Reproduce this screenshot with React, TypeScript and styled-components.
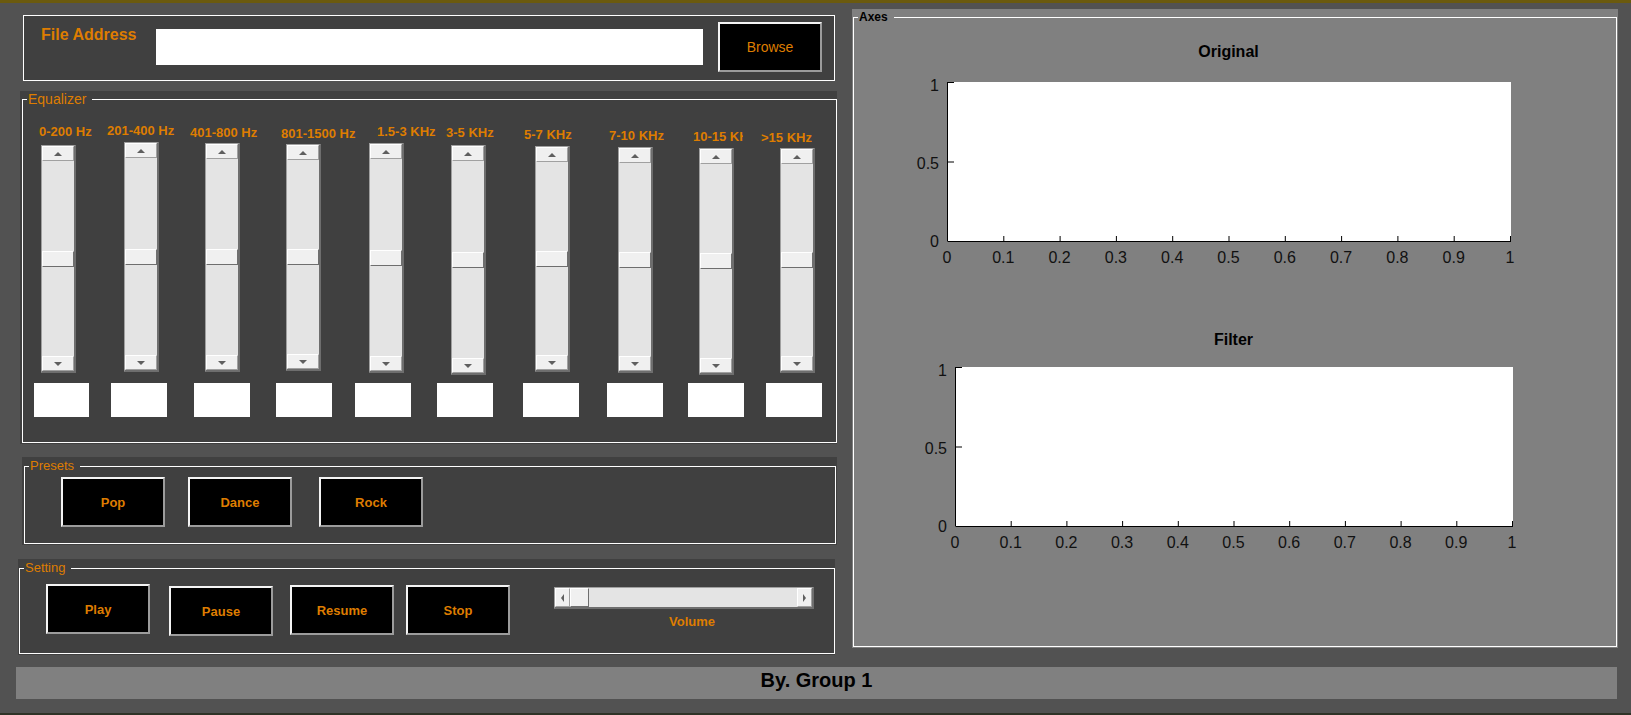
import React from "react";
import styled, { createGlobalStyle } from "styled-components";

const ORANGE = "#de7d00";
const PANEL = "#404040";
const PAGE = "#525252";
const AXES_BG = "#808080";
const FONT = `"Liberation Sans", Arial, Helvetica, sans-serif`;

const GlobalStyle = createGlobalStyle`
  html, body { margin: 0; padding: 0; background: ${PAGE}; }
  body { font-family: ${FONT}; }
  #root { width: 1631px; height: 715px; overflow: hidden; }
  *, *::before, *::after { box-sizing: border-box; }
`;

const Window = styled.div`
  width: 1631px;
  height: 715px;
  background: ${PAGE};
  display: flex;
  flex-direction: column;
  overflow: hidden;
`;

const TopStrip = styled.div`
  flex: none;
  height: 3px;
  background: #6b5a0e;
`;

const Main = styled.div`
  flex: none;
  display: flex;
  align-items: flex-start;
  padding-left: 18px;
`;

const LeftColumn = styled.div`
  flex: none;
  width: 819px;
  display: flex;
  flex-direction: column;
`;

/* ---------- File address panel ---------- */

const FilePanel = styled.div`
  flex: none;
  margin: 12px 0 0 5px;
  width: 812px;
  height: 66px;
  border: 1px solid #ffffff;
  background: ${PANEL};
  display: flex;
  align-items: flex-start;
`;

const FileLabel = styled.div`
  flex: none;
  margin: 10px 0 0 17px;
  width: 115px;
  font-size: 16px;
  line-height: 18px;
  font-weight: 700;
  color: ${ORANGE};
  white-space: nowrap;
`;

const FileInput = styled.input`
  flex: none;
  margin-top: 13px;
  width: 547px;
  height: 36px;
  border: none;
  outline: none;
  background: #ffffff;
  padding: 0 4px;
  font-family: ${FONT};
`;

/* ---------- generic group (titled panel) ---------- */

const Group = styled.div<{ $w: number; $h: number; $ml: number; $mt: number; $pad: string; $bg: string }>`
  flex: none;
  display: flex;
  width: ${(p) => p.$w}px;
  height: ${(p) => p.$h}px;
  margin: ${(p) => p.$mt}px 0 0 ${(p) => p.$ml}px;
  padding: ${(p) => p.$pad};
  background: ${(p) => p.$bg};
`;

const Frame = styled.div`
  flex: 1;
  min-width: 0;
  display: flex;
  flex-direction: column;
  border: 1px solid #ffffff;
`;

const Legend = styled.div<{ $size: number; $lh: number; $bold?: boolean; $color: string; $bg: string; $lift: number }>`
  flex: none;
  align-self: flex-start;
  margin: -${(p) => p.$lift}px 0 0 4px;
  padding: 0 6px 0 1px;
  font-size: ${(p) => p.$size}px;
  line-height: ${(p) => p.$lh}px;
  font-weight: ${(p) => (p.$bold ? 700 : 400)};
  color: ${(p) => p.$color};
  background: ${(p) => p.$bg};
  white-space: nowrap;
`;

/* ---------- buttons ---------- */

const PushButton = styled.button<{ $ml: number; $mt: number; $regular?: boolean }>`
  flex: none;
  width: 104px;
  height: 50px;
  margin: ${(p) => p.$mt}px 0 0 ${(p) => p.$ml}px;
  padding: 0;
  background: #000000;
  color: ${ORANGE};
  font-family: ${FONT};
  font-size: ${(p) => (p.$regular ? 14 : 13)}px;
  font-weight: ${(p) => (p.$regular ? 400 : 700)};
  border-style: solid;
  border-width: 2px;
  border-color: #f4f4f4 #9c9c9c #9c9c9c #f4f4f4;
  cursor: pointer;
`;

/* ---------- scroll bar parts ---------- */

const Arrow = styled.span<{ $dir: "up" | "down" | "left" | "right" }>`
  width: 0;
  height: 0;
  border-style: solid;
  border-color: transparent;
  ${(p) =>
    p.$dir === "up"
      ? "border-width: 0 4px 4px 4px; border-bottom-color: #5f5f5f;"
      : p.$dir === "down"
      ? "border-width: 4px 4px 0 4px; border-top-color: #5f5f5f;"
      : p.$dir === "left"
      ? "border-width: 4px 3px 4px 0; border-right-color: #5f5f5f;"
      : "border-width: 4px 0 4px 3px; border-left-color: #5f5f5f;"}
`;

const ScrollBtn = styled.div<{ $vertical?: boolean }>`
  flex: none;
  ${(p) => (p.$vertical ? "height: 15px;" : "width: 15px;")}
  display: flex;
  align-items: center;
  justify-content: center;
  background: #f0f0f0;
  border: 1px solid;
  border-color: #ffffff #a0a0a0 #a0a0a0 #ffffff;
`;

const Thumb = styled.div<{ $vertical?: boolean }>`
  flex: none;
  ${(p) => (p.$vertical ? "height: 16px;" : "width: 19px;")}
  background: #f0f0f0;
  border: 1px solid;
  border-color: #ffffff #6e6e6e #6e6e6e #ffffff;
`;

const TrackFill = styled.div`
  flex: 1;
`;

const VSlider = styled.div<{ $ml: number; $mt: number; $h: number }>`
  flex: none;
  width: 35px;
  height: ${(p) => p.$h}px;
  margin: ${(p) => p.$mt}px 0 0 ${(p) => p.$ml}px;
  display: flex;
  flex-direction: column;
  background: #e4e4e4;
  border-style: solid;
  border-width: 1px 2px 2px 1px;
  border-color: #a0a0a0 #6e6e6e #6e6e6e #a0a0a0;
`;

const HSlider = styled.div`
  flex: none;
  width: 260px;
  height: 22px;
  display: flex;
  background: #e4e4e4;
  border-style: solid;
  border-width: 1px 2px 2px 1px;
  border-color: #a0a0a0 #6e6e6e #6e6e6e #a0a0a0;
`;

/* ---------- equalizer ---------- */

const BandRow = styled.div<{ $h: number; $mt?: number }>`
  flex: none;
  display: flex;
  align-items: flex-start;
  height: ${(p) => p.$h}px;
  margin-top: ${(p) => p.$mt ?? 0}px;
`;

const BandLabel = styled.div<{ $ml: number; $mt: number; $w: number }>`
  flex: none;
  width: ${(p) => p.$w}px;
  margin: ${(p) => p.$mt}px 0 0 ${(p) => p.$ml}px;
  overflow: hidden;
  white-space: nowrap;
  font-size: 13px;
  line-height: 15px;
  font-weight: 700;
  color: ${ORANGE};
`;

const ValueBox = styled.div<{ $ml: number; $w: number }>`
  flex: none;
  width: ${(p) => p.$w}px;
  height: 34px;
  margin-left: ${(p) => p.$ml}px;
  background: #ffffff;
`;

/* ---------- setting ---------- */

const ControlRow = styled.div<{ $mt: number }>`
  flex: none;
  display: flex;
  align-items: flex-start;
  margin-top: ${(p) => p.$mt}px;
`;

const VolumeBlock = styled.div<{ $ml: number; $mt: number }>`
  flex: none;
  display: flex;
  flex-direction: column;
  margin: ${(p) => p.$mt}px 0 0 ${(p) => p.$ml}px;
`;

const VolumeLabel = styled.div`
  margin: 5px 0 0 115px;
  font-size: 13px;
  line-height: 15px;
  font-weight: 700;
  color: ${ORANGE};
`;

/* ---------- axes ---------- */

const AxesBlock = styled.div<{ $ml: number; $mt: number }>`
  flex: none;
  display: flex;
  flex-direction: column;
  align-items: flex-start;
  margin: ${(p) => p.$mt}px 0 0 ${(p) => p.$ml}px;
`;

const AxesTitle = styled.div<{ $w: number }>`
  width: ${(p) => p.$w + 40}px;
  padding-left: 40px;
  text-align: center;
  font-size: 16px;
  line-height: 18px;
  font-weight: 700;
  color: #000000;
`;

const PlotRow = styled.div<{ $mt: number }>`
  display: flex;
  margin-top: ${(p) => p.$mt}px;
`;

const YTicks = styled.div<{ $h: number }>`
  flex: none;
  width: 40px;
  height: ${(p) => p.$h}px;
  padding-right: 8px;
  display: flex;
  flex-direction: column;
  justify-content: space-between;
  align-items: flex-end;
`;

const YTick = styled.div`
  height: 0;
  display: flex;
  align-items: center;
  padding-top: 4px;
  font-size: 16px;
  line-height: 18px;
  color: #111111;
  white-space: nowrap;
`;

const XTicks = styled.div<{ $w: number }>`
  width: ${(p) => p.$w}px;
  margin: 7px 0 0 40px;
  display: flex;
  justify-content: space-between;
`;

const XTick = styled.div`
  width: 0;
  display: flex;
  justify-content: center;
  font-size: 16px;
  line-height: 18px;
  color: #111111;
  white-space: nowrap;
`;

const PlotSvg = styled.svg`
  display: block;
  flex: none;
`;

/* ---------- footer ---------- */

const Footer = styled.div`
  flex: none;
  margin: 12px 0 0 16px;
  width: 1601px;
  height: 32px;
  background: ${AXES_BG};
  text-align: center;
  font-size: 20px;
  line-height: 26px;
  font-weight: 700;
  color: #000000;
`;

const BottomLine = styled.div`
  flex: none;
  margin-top: auto;
  height: 2px;
  background: #2f3327;
`;

/* ---------- data ---------- */

type Band = {
  label: string;
  lx: number; lw: number; lt: number;
  sx: number; st: number; sh: number;
  bx: number; bw: number;
};

const bands: Band[] = [
  { label: "0-200 Hz", lx: 39, lw: 64, lt: 1, sx: 41, st: 3, sh: 228, bx: 34, bw: 55 },
  { label: "201-400 Hz", lx: 107, lw: 76, lt: 0, sx: 124, st: 0, sh: 230, bx: 111, bw: 56 },
  { label: "401-800 Hz", lx: 190, lw: 80, lt: 2, sx: 205, st: 1, sh: 229, bx: 194, bw: 56 },
  { label: "801-1500 Hz", lx: 281, lw: 90, lt: 3, sx: 286, st: 2, sh: 227, bx: 276, bw: 56 },
  { label: "1.5-3 KHz", lx: 377, lw: 64, lt: 1, sx: 369, st: 1, sh: 230, bx: 355, bw: 56 },
  { label: "3-5 KHz", lx: 446, lw: 72, lt: 2, sx: 451, st: 3, sh: 230, bx: 437, bw: 56 },
  { label: "5-7 KHz", lx: 524, lw: 80, lt: 4, sx: 535, st: 4, sh: 226, bx: 523, bw: 56 },
  { label: "7-10 KHz", lx: 609, lw: 80, lt: 5, sx: 618, st: 5, sh: 226, bx: 607, bw: 56 },
  { label: "10-15 KHz", lx: 693, lw: 50, lt: 6, sx: 699, st: 6, sh: 227, bx: 688, bw: 56 },
  { label: ">15 KHz", lx: 761, lw: 60, lt: 7, sx: 780, st: 6, sh: 225, bx: 766, bw: 56 },
];

const EQ_LEFT = 23;
const SLIDER_W = 35;

const xTickLabels = ["0", "0.1", "0.2", "0.3", "0.4", "0.5", "0.6", "0.7", "0.8", "0.9", "1"];
const yTickLabels = ["1", "0.5", "0"];

function gaps<T>(items: T[], start: (t: T) => number, width: (t: T) => number, origin: number): number[] {
  const out: number[] = [];
  let prev = origin;
  for (const it of items) {
    out.push(start(it) - prev);
    prev = start(it) + width(it);
  }
  return out;
}

function VerticalSlider({ ml, mt, h }: { ml: number; mt: number; h: number }) {
  return (
    <VSlider $ml={ml} $mt={mt} $h={h}>
      <ScrollBtn $vertical>
        <Arrow $dir="up" />
      </ScrollBtn>
      <TrackFill />
      <Thumb $vertical />
      <TrackFill />
      <ScrollBtn $vertical>
        <Arrow $dir="down" />
      </ScrollBtn>
    </VSlider>
  );
}

function Plot({ w, h }: { w: number; h: number }) {
  const xs = Array.from({ length: 11 }, (_, i) => 0.5 + (i * w) / 10);
  const ys = [0.5, (h - 1) / 2 + 0.5, h - 0.5];
  return (
    <PlotSvg width={w + 1} height={h} viewBox={`0 0 ${w + 1} ${h}`}>
      <rect x={0} y={0} width={w + 1} height={h} fill="#ffffff" />
      <path d={`M0.5 0 V${h - 0.5} H${w + 1}`} stroke="#000000" strokeWidth={1} fill="none" />
      {xs.map((x, i) => (
        <path key={`x${i}`} d={`M${x} ${h - 1} V${h - 6}`} stroke="#000000" strokeWidth={1} />
      ))}
      {ys.map((y, i) => (
        <path key={`y${i}`} d={`M1 ${y} H7`} stroke="#000000" strokeWidth={1} />
      ))}
    </PlotSvg>
  );
}

function Axes({ title, ml, mt, titleGap, w }: { title: string; ml: number; mt: number; titleGap: number; w: number }) {
  const h = 160;
  return (
    <AxesBlock $ml={ml} $mt={mt}>
      <AxesTitle $w={w}>{title}</AxesTitle>
      <PlotRow $mt={titleGap}>
        <YTicks $h={h}>
          {yTickLabels.map((t) => (
            <YTick key={t}>{t}</YTick>
          ))}
        </YTicks>
        <Plot w={w} h={h} />
      </PlotRow>
      <XTicks $w={w}>
        {xTickLabels.map((t) => (
          <XTick key={t}>{t}</XTick>
        ))}
      </XTicks>
    </AxesBlock>
  );
}

export default function App() {
  const labelGaps = gaps(bands, (b) => b.lx, (b) => b.lw, EQ_LEFT);
  const sliderGaps = gaps(bands, (b) => b.sx, () => SLIDER_W, EQ_LEFT);
  const boxGaps = gaps(bands, (b) => b.bx, (b) => b.bw, EQ_LEFT);

  return (
    <>
      <GlobalStyle />
      <Window>
        <TopStrip />
        <Main>
          <LeftColumn>
            <FilePanel>
              <FileLabel>File Address</FileLabel>
              <FileInput readOnly value="" />
              <PushButton $ml={15} $mt={6} $regular>
                Browse
              </PushButton>
            </FilePanel>

            <Group $w={817} $h={353} $ml={2} $mt={10} $pad="8px 0 1px 2px" $bg={PANEL}>
              <Frame>
                <Legend $size={14} $lh={16} $color={ORANGE} $bg={PANEL} $lift={9}>
                  Equalizer
                </Legend>
                <BandRow $h={19} $mt={16}>
                  {bands.map((b, i) => (
                    <BandLabel key={b.label} $ml={labelGaps[i]} $mt={b.lt} $w={b.lw}>
                      {b.label}
                    </BandLabel>
                  ))}
                </BandRow>
                <BandRow $h={241}>
                  {bands.map((b, i) => (
                    <VerticalSlider key={b.label} ml={sliderGaps[i]} mt={b.st} h={b.sh} />
                  ))}
                </BandRow>
                <BandRow $h={34}>
                  {bands.map((b, i) => (
                    <ValueBox key={b.label} $ml={boxGaps[i]} $w={b.bw} />
                  ))}
                </BandRow>
              </Frame>
            </Group>

            <Group $w={815} $h={88} $ml={4} $mt={13} $pad="9px 1px 1px 2px" $bg={PANEL}>
              <Frame>
                <Legend $size={13} $lh={18} $color={ORANGE} $bg={PANEL} $lift={10}>
                  Presets
                </Legend>
                <ControlRow $mt={2}>
                  <PushButton $ml={36} $mt={0}>Pop</PushButton>
                  <PushButton $ml={23} $mt={0}>Dance</PushButton>
                  <PushButton $ml={27} $mt={0}>Rock</PushButton>
                </ControlRow>
              </Frame>
            </Group>

            <Group $w={817} $h={96} $ml={0} $mt={14} $pad="9px 0 1px 1px" $bg={PANEL}>
              <Frame>
                <Legend $size={13} $lh={18} $color={ORANGE} $bg={PANEL} $lift={10}>
                  Setting
                </Legend>
                <ControlRow $mt={0}>
                  <PushButton $ml={26} $mt={7}>Play</PushButton>
                  <PushButton $ml={19} $mt={9}>Pause</PushButton>
                  <PushButton $ml={17} $mt={8}>Resume</PushButton>
                  <PushButton $ml={12} $mt={8}>Stop</PushButton>
                  <VolumeBlock $ml={44} $mt={10}>
                    <HSlider>
                      <ScrollBtn>
                        <Arrow $dir="left" />
                      </ScrollBtn>
                      <Thumb />
                      <TrackFill />
                      <ScrollBtn>
                        <Arrow $dir="right" />
                      </ScrollBtn>
                    </HSlider>
                    <VolumeLabel>Volume</VolumeLabel>
                  </VolumeBlock>
                </ControlRow>
              </Frame>
            </Group>
          </LeftColumn>

          <Group $w={766} $h={639} $ml={15} $mt={6} $pad="8px 1px 1px 1px" $bg={AXES_BG}>
            <Frame>
              <Legend $size={12} $lh={16} $bold $color="#000000" $bg={AXES_BG} $lift={9}>
                Axes
              </Legend>
              <Axes title="Original" ml={53} mt={18} titleGap={21} w={563} />
              <Axes title="Filter" ml={61} mt={64} titleGap={18} w={557} />
            </Frame>
          </Group>
        </Main>

        <Footer>By. Group 1</Footer>
        <BottomLine />
      </Window>
    </>
  );
}
